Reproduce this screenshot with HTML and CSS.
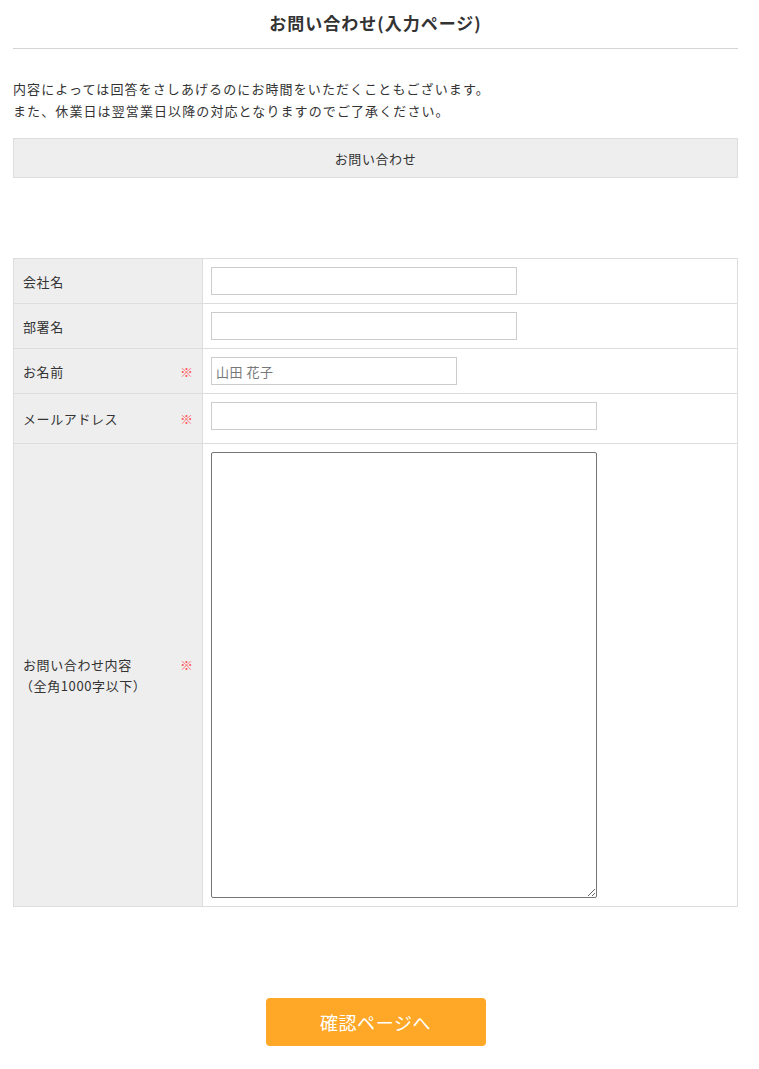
FILE: index.html
```html
<!DOCTYPE html>
<html lang="ja">
<head>
<meta charset="utf-8">
<title>お問い合わせ(入力ページ)</title>
<link rel="stylesheet" href="styles.css">
</head>
<body>
<div class="wrap">
  <h1 class="title">お問い合わせ(入力ページ)</h1>
  <p class="lead">内容によっては回答をさしあげるのにお時間をいただくこともございます。<br>また、休業日は翌営業日以降の対応となりますのでご了承ください。</p>
  <div class="section-head">お問い合わせ</div>
  <div class="form">
    <div class="row r45">
      <div class="label"><span>会社名</span></div>
      <div class="field"><input class="input w306" type="text"></div>
    </div>
    <div class="row r45">
      <div class="label"><span>部署名</span></div>
      <div class="field"><input class="input w306" type="text"></div>
    </div>
    <div class="row r45">
      <div class="label"><span>お名前</span><span class="req">※</span></div>
      <div class="field"><input class="input w246" type="text" placeholder="山田 花子"></div>
    </div>
    <div class="row r50">
      <div class="label"><span>メールアドレス</span><span class="req">※</span></div>
      <div class="field"><input class="input w386" type="text"></div>
    </div>
    <div class="row last">
      <div class="label"><span>お問い合わせ内容<br><span class="sub">（全角1000字以下）</span></span><span class="req req-top">※</span></div>
      <div class="field"><textarea class="textarea"></textarea></div>
    </div>
  </div>
  <div class="actions">
    <button class="btn" type="button">確認ページへ</button>
  </div>
</div>
</body>
</html>
```
FILE: styles.css
```css
* { box-sizing: border-box; }
html, body { margin: 0; padding: 0; background: #fff; }
body {
  font-family: "Noto Sans CJK JP", "Noto Sans", sans-serif;
  color: #333;
  font-size: 13px;
  letter-spacing: 0.6px;
}
.wrap {
  margin-left: 13px;
  width: 725px;
}
.title {
  margin: 0;
  font-size: 17px;
  font-weight: bold;
  letter-spacing: 1px;
  text-align: center;
  line-height: 24px;
  padding-top: 11px;
  padding-bottom: 13px;
  border-bottom: 1px solid #d4d4d4;
}
.lead {
  margin: 0;
  padding-top: 29px;
  line-height: 22px;
  font-size: 13px;
  letter-spacing: 1.1px;
}
.section-head {
  margin-top: 16px;
  height: 40px;
  background: #eee;
  border: 1px solid #ddd;
  display: flex;
  align-items: center;
  justify-content: center;
  font-size: 13px;
}
.form {
  margin-top: 80px;
  border: 1px solid #ddd;
  border-bottom: none;
}
.row {
  display: grid;
  grid-template-columns: 189px 1fr;
  border-bottom: 1px solid #ddd;
}
.r45 { height: 45px; }
.r50 { height: 50px; }
.label {
  background: #eee;
  border-right: 1px solid #ddd;
  display: flex;
  align-items: center;
  justify-content: space-between;
  padding: 0 9px 0 9px;
  font-size: 13px;
  line-height: 21px;
}
.sub { margin-left: -3px; }
.req {
  color: #ff5a5a;
  font-size: 13px;
  letter-spacing: 0;
}
.req-top { align-self: center; margin-top: -21px; }
.field {
  padding: 8px;
}
.input {
  display: block;
  height: 28px;
  border: 1px solid #ccc;
  border-radius: 0;
  padding: 0 4px;
  font-family: "Noto Sans CJK JP", "Noto Sans", sans-serif;
  font-size: 13px;
  letter-spacing: 0.5px;
  color: #333;
  background: #fff;
  outline: none;
}
.input::placeholder { color: #777; }
.w306 { width: 306px; }
.w246 { width: 246px; }
.w386 { width: 386px; }
.textarea {
  display: block;
  width: 386px;
  height: 446px;
  border: 1px solid #767676;
  border-radius: 2px;
  margin: 0;
  padding: 2px;
  font-family: "Noto Sans CJK JP", sans-serif;
  font-size: 13px;
}
.actions {
  display: flex;
  justify-content: center;
  padding-top: 91px;
}
.btn {
  width: 220px;
  height: 48px;
  background: #ffa726;
  color: #fff;
  border: none;
  border-radius: 4px;
  font-family: "Noto Sans CJK JP", "Noto Sans", sans-serif;
  font-size: 18px;
  letter-spacing: 0.6px;
  cursor: pointer;
}
```
